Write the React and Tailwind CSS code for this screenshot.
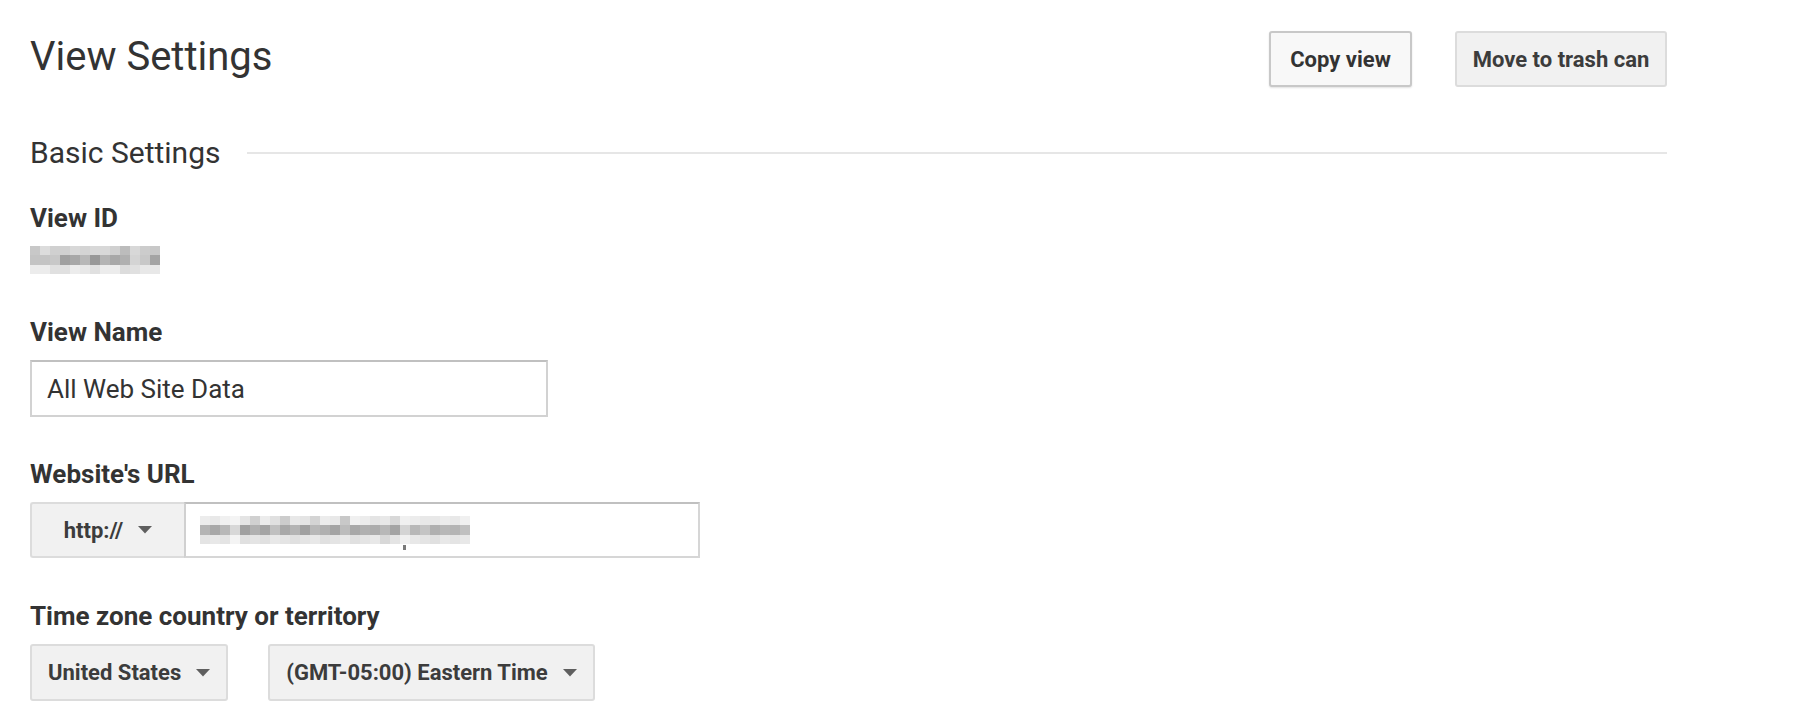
import React from 'react';

const viewIdRows = [
  ['#c8c8c8', '#dcdcdc', '#d0d0d0', '#d0d0d0', '#d8d8d8', '#d4d4d4', '#d8d8d8', '#d8d8d8', '#d0d0d0', '#bcbcbc', '#d8d8d8', '#cccccc', '#c8c8c8'],
  ['#c4c4c4', '#c4c4c4', '#c8c8c8', '#a0a0a0', '#a8a8a8', '#b8b8b8', '#989898', '#b4b4b4', '#a8a8a8', '#b0b0b0', '#d4d4d4', '#c8c8c8', '#a4a4a4'],
  ['#ececec', '#ececec', '#e0e0e0', '#e0e0e0', '#ececec', '#e8e8e8', '#e0e0e0', '#ececec', '#ececec', '#dcdcdc', '#e0e0e0', '#e8e8e8', '#e8e8e8'],
];

const urlRows = [
  [0xec, 0xe8, 0xf0, 0xf4, 0xe4, 0xd0, 0xec, 0xe0, 0xcc, 0xe8, 0xe4, 0xd4, 0xec, 0xe8, 0xc8, 0xf0, 0xec, 0xe4, 0xe8, 0xd8, 0xf0, 0xec, 0xe8, 0xe8, 0xec, 0xe8, 0xf0],
  [0xb4, 0xa8, 0xb8, 0xd8, 0xa0, 0xb0, 0xa4, 0xc0, 0xa8, 0xb4, 0xa0, 0xb8, 0xb0, 0xa4, 0xbc, 0xa8, 0xb0, 0xac, 0xb8, 0xa4, 0xd4, 0xb8, 0xc4, 0xb0, 0xb8, 0xb4, 0xc0],
  [0xe4, 0xe8, 0xe4, 0xf4, 0xe0, 0xe4, 0xe0, 0xe8, 0xe4, 0xe0, 0xe4, 0xe8, 0xe0, 0xe4, 0xe8, 0xe0, 0xe4, 0xe8, 0xd8, 0xe4, 0xf0, 0xe8, 0xe4, 0xe0, 0xe8, 0xe4, 0xe8],
].map(row => row.map(v => `rgb(${v},${v},${v})`));

// pixelated (redacted) text
function Mosaic({ rows, label }) {
  return (
    <div className="flex flex-col" aria-label={label}>
      {rows.map((row, i) => (
        <div key={i} className={`flex ${i === 1 ? 'h-[10px]' : 'h-[9px]'}`}>
          {row.map((c, j) => (
            <div key={j} className="w-[10px] h-full" style={{ backgroundColor: c }} />
          ))}
        </div>
      ))}
    </div>
  );
}

function Caret() {
  return (
    <svg width="14" height="8" viewBox="0 0 14 8" className="shrink-0">
      <polygon points="0,0 14,0 7,7.5" fill="#5f5f5f" />
    </svg>
  );
}

function Label({ children }) {
  return (
    <div className="text-[26px] font-bold leading-[30px] text-[#333] mb-[13px]">{children}</div>
  );
}

function SelectBox({ children }) {
  return (
    <div className="h-[57px] flex items-center gap-[15px] px-4 bg-[#f1f1f1] border-2 border-[#dcdcdc] rounded-[3px] text-[22px] font-bold text-[#3c3c3c]">
      <span>{children}</span>
      <Caret />
    </div>
  );
}

export default function App() {
  return (
    <div className="min-h-screen bg-white pl-[30px] font-['Roboto','Liberation_Sans',sans-serif] text-[#333]">
      <div className="w-[1637px]">
        {/* Header */}
        <div className="flex items-start justify-between pt-[31px]">
          <h1 className="mt-[3px] text-[40px] leading-[46px] font-normal text-[#333]">View Settings</h1>
          <div className="flex gap-[43px]">
            <button className="w-[143px] h-[56px] bg-[#f8f8f8] border-2 border-[#c8c8c8] rounded-[3px] shadow-[0_1px_2px_rgba(0,0,0,0.12)] text-[22px] font-bold text-[#333]">
              Copy view
            </button>
            <button className="w-[212px] h-[56px] bg-[#f1f1f1] border-2 border-[#dcdcdc] rounded-[3px] text-[22px] font-bold text-[#3c3c3c]">
              Move to trash can
            </button>
          </div>
        </div>

        {/* Section header */}
        <div className="mt-[49px] flex items-center gap-[27px]">
          <h2 className="text-[30px] leading-[34px] font-normal text-[#333] whitespace-nowrap">Basic Settings</h2>
          <div className="flex-1 h-[2px] bg-[#e6e6e6]" />
        </div>

        {/* View ID */}
        <div className="mt-[33px]">
          <Label>View ID</Label>
          <Mosaic rows={viewIdRows} label="View ID (hidden)" />
        </div>

        {/* View Name */}
        <div className="mt-[43px]">
          <Label>View Name</Label>
          <input
            type="text"
            defaultValue="All Web Site Data"
            className="w-[518px] h-[57px] pl-[15px] pr-4 border-2 border-[#d2d2d2] border-t-[#c0c0c0] text-[26px] text-[#333] outline-none bg-white"
          />
        </div>

        {/* URL */}
        <div className="mt-[42px]">
          <Label>Website's URL</Label>
          <div className="flex w-[670px] h-[56px]">
            <div className="w-[154px] flex items-center justify-center gap-[15px] bg-[#f1f1f1] border-2 border-r-0 border-[#dcdcdc] rounded-l-[3px] text-[22px] font-bold text-[#3c3c3c]">
              <span>http://</span>
              <Caret />
            </div>
            <div className="flex-1 flex items-center pl-[14px] border-2 border-[#d6d6d6] border-t-[#c0c0c0] border-l-[#d0d0d0] bg-white relative">
              <Mosaic rows={urlRows} label="Website URL (hidden)" />
              <div className="absolute left-[217px] top-[41px] w-[3px] h-[5px] bg-[#7a7a7a]" />
            </div>
          </div>
        </div>

        {/* Time zone */}
        <div className="mt-[43px]">
          <Label>Time zone country or territory</Label>
          <div className="flex gap-[40px]">
            <SelectBox>United States</SelectBox>
            <SelectBox>(GMT-05:00) Eastern Time</SelectBox>
          </div>
        </div>
      </div>
    </div>
  );
}
